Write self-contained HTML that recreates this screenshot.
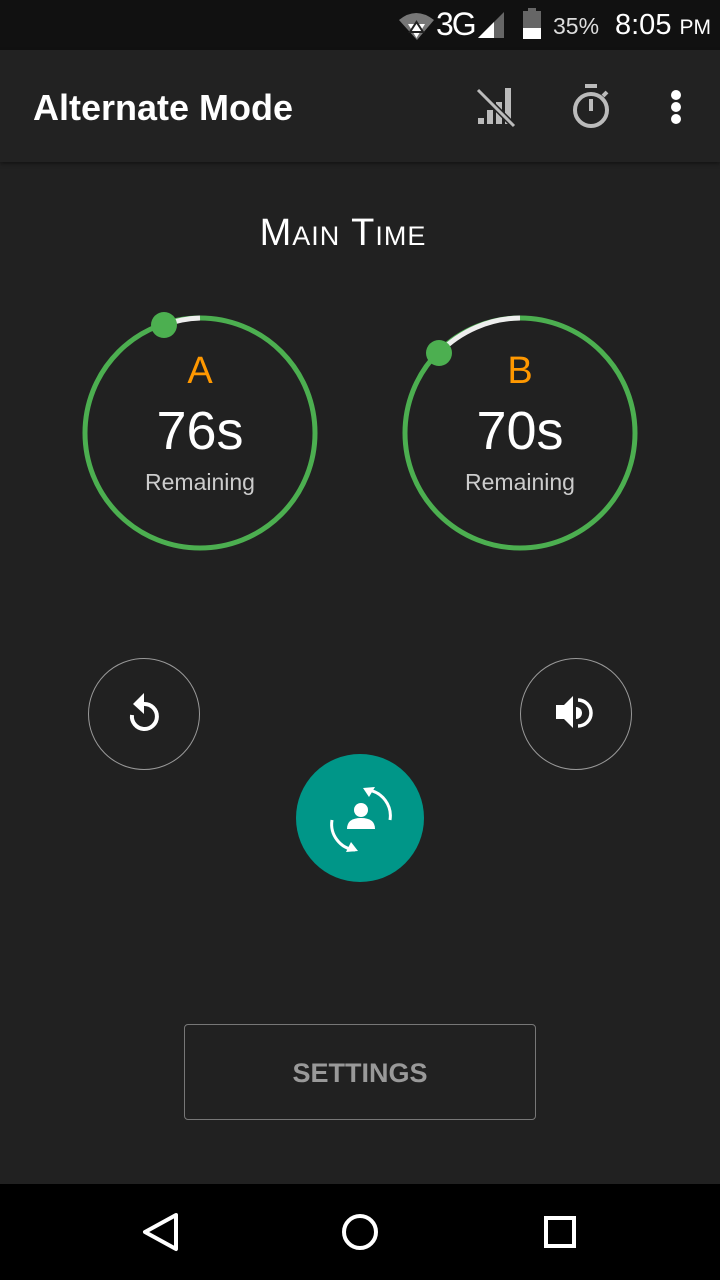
<!DOCTYPE html>
<html><head><style>
body{margin:0;width:720px;height:1280px;background:#212121;position:relative;overflow:hidden;font-family:"Liberation Sans",sans-serif;}
.a{position:absolute;}
</style></head><body>
<div class="a" style="left:0;top:0;width:720px;height:50px;background:#111;"></div>
<svg class="a" style="left:398px;top:8px" width="40" height="34" viewBox="0 0 40 34"><path d="M1 12 Q18 -2 36 12 L19 32 Z" fill="#777"/><path d="M10 16 L27 16 L18.5 30 Z" fill="#fff"/><path d="M12 24 L25 24 L18.5 14Z" fill="none" stroke="#222" stroke-width="2"/></svg>
<div class="a" style="left:436px;top:6px;color:#fff;font-size:32px;letter-spacing:-2px;">3G</div>
<svg class="a" style="left:476px;top:10px" width="30" height="30"><path d="M2 28 L28 2 L28 28Z" fill="#666"/><path d="M2 28 L18 12 L18 28Z" fill="#fff"/></svg>
<div class="a" style="left:523px;top:11px;width:18px;height:28px;background:#666;"></div>
<div class="a" style="left:523px;top:28px;width:18px;height:11px;background:#fff;"></div>
<div class="a" style="left:528px;top:8px;width:8px;height:4px;background:#666;"></div>
<div class="a" style="left:553px;top:13px;color:#ddd;font-size:23px;">35%</div>
<div class="a" style="left:615px;top:9px;color:#fff;font-size:29px;">8:05 <span style="font-size:21px">PM</span></div>

<div class="a" style="left:0;top:50px;width:720px;height:112px;background:#222;box-shadow:0 2px 4px rgba(0,0,0,.4);"></div>
<div class="a" style="left:33px;top:87px;color:#fff;font-size:36px;font-weight:bold;">Alternate Mode</div>
<svg class="a" style="left:476px;top:88px" width="40" height="40"><g fill="#bbb"><rect x="2" y="30" width="6" height="6"/><rect x="11" y="22" width="6" height="14"/><rect x="20" y="14" width="6" height="22"/><rect x="29" y="0" width="6" height="36"/></g><path d="M2 2 L38 38" stroke="#222" stroke-width="6"/><path d="M2 2 L38 38" stroke="#bbb" stroke-width="3"/></svg>
<svg class="a" style="left:570px;top:83px" width="44" height="46"><rect x="15" y="1" width="12" height="4" fill="#bbb"/><circle cx="21" cy="27" r="16" fill="none" stroke="#bbb" stroke-width="4"/><rect x="19" y="16" width="4" height="12" fill="#bbb"/><path d="M33 13 L37 9" stroke="#bbb" stroke-width="4"/></svg>
<div class="a" style="left:671px;top:90px;width:10px;height:10px;border-radius:50%;background:#fff;box-shadow:0 12px 0 #fff,0 24px 0 #fff;"></div>

<div class="a" style="left:0;top:212px;width:686px;text-align:center;color:#fff;font-size:38px;font-variant:small-caps;letter-spacing:1px;">Main Time</div>

<svg class="a" style="left:0;top:300px" width="720" height="260">
<circle cx="200" cy="133" r="115" fill="none" stroke="#4caf50" stroke-width="5"/>
<path d="M164 25 A115 115 0 0 1 200 18" fill="none" stroke="#eee" stroke-width="5"/>
<circle cx="164" cy="25" r="13" fill="#4caf50"/>
<circle cx="520" cy="133" r="115" fill="none" stroke="#4caf50" stroke-width="5"/>
<path d="M439 53 A115 115 0 0 1 520 18" fill="none" stroke="#eee" stroke-width="5"/>
<circle cx="439" cy="53" r="13" fill="#4caf50"/>
</svg>
<div class="a" style="left:100px;top:350px;width:200px;text-align:center;color:#ff9800;font-size:38px;">A</div>
<div class="a" style="left:100px;top:400px;width:200px;text-align:center;color:#fff;font-size:54px;">76s</div>
<div class="a" style="left:100px;top:469px;width:200px;text-align:center;color:#ccc;font-size:23px;">Remaining</div>
<div class="a" style="left:420px;top:350px;width:200px;text-align:center;color:#ff9800;font-size:38px;">B</div>
<div class="a" style="left:420px;top:400px;width:200px;text-align:center;color:#fff;font-size:54px;">70s</div>
<div class="a" style="left:420px;top:469px;width:200px;text-align:center;color:#ccc;font-size:23px;">Remaining</div>

<div class="a" style="left:88px;top:658px;width:110px;height:110px;border:1px solid #999;border-radius:50%;"></div>
<svg class="a" style="left:122px;top:690px" width="44" height="44"><path d="M22 14 A12.5 12.5 0 1 1 10 25" fill="none" stroke="#fff" stroke-width="4"/><path d="M22 3 L22 24 L11 14Z" fill="#fff"/></svg>
<div class="a" style="left:520px;top:658px;width:110px;height:110px;border:1px solid #999;border-radius:50%;"></div>
<svg class="a" style="left:555px;top:694px" width="44" height="42"><path d="M1 11 L9 11 L18 2 L18 34 L9 25 L1 25Z" fill="#fff"/><path d="M23 6 A13 13 0 0 1 23 32" fill="none" stroke="#fff" stroke-width="3.5"/><path d="M21 13 A6 6 0 0 1 21 25Z" fill="#fff"/></svg>

<div class="a" style="left:296px;top:754px;width:128px;height:128px;border-radius:50%;background:#009688;"></div>
<svg class="a" style="left:320px;top:778px" width="80" height="80"><circle cx="41" cy="32" r="7" fill="#fff"/><path d="M27 51 Q27 40 41 40 Q55 40 55 51Z" fill="#fff"/><path d="M48 12 A26 26 0 0 1 70 42" fill="none" stroke="#fff" stroke-width="3"/><path d="M43 10 L55 9 L49 19Z" fill="#fff"/><path d="M12 42 A26 26 0 0 0 35 72" fill="none" stroke="#fff" stroke-width="3"/><path d="M38 73 L26 74 L31 64Z" fill="#fff"/></svg>

<div class="a" style="left:184px;top:1024px;width:350px;height:94px;border:1px solid #777;border-radius:4px;"></div>
<div class="a" style="left:184px;top:1058px;width:352px;text-align:center;color:#999;font-size:27px;font-weight:bold;">SETTINGS</div>

<div class="a" style="left:0;top:1184px;width:720px;height:96px;background:#000;"></div>
<svg class="a" style="left:0;top:1184px" width="720" height="96"><path d="M176 31 L145 48 L176 65Z" fill="none" stroke="#fff" stroke-width="4" stroke-linejoin="round"/><circle cx="360" cy="48" r="16" fill="none" stroke="#fff" stroke-width="4"/><rect x="546" y="34" width="28" height="28" fill="none" stroke="#fff" stroke-width="4"/></svg>
</body></html>
